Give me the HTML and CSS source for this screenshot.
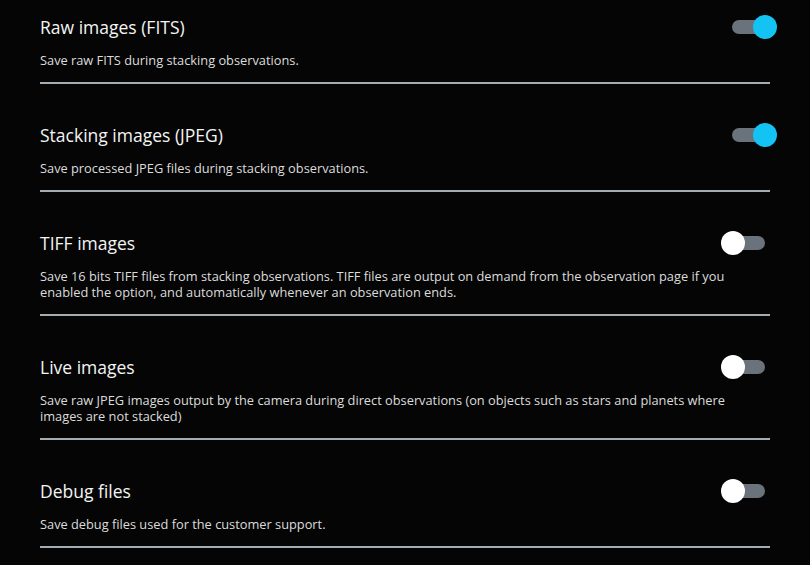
FILE: index.html
```html
<!DOCTYPE html>
<html>
<head>
<meta charset="utf-8">
<link rel="stylesheet" href="styles.css">
</head>
<body>
<div class="list">
  <section class="item">
    <div class="head">
      <h2 class="title">Raw images (FITS)</h2>
      <span class="toggle on"><span class="track"></span><span class="knob"></span></span>
    </div>
    <p class="desc">Save raw FITS during stacking observations.</p>
  </section>
  <section class="item">
    <div class="head">
      <h2 class="title">Stacking images (JPEG)</h2>
      <span class="toggle on"><span class="track"></span><span class="knob"></span></span>
    </div>
    <p class="desc">Save processed JPEG files during stacking observations.</p>
  </section>
  <section class="item">
    <div class="head">
      <h2 class="title">TIFF images</h2>
      <span class="toggle"><span class="track"></span><span class="knob"></span></span>
    </div>
    <p class="desc">Save 16 bits TIFF files from stacking observations. TIFF files are output on demand from the observation page if you enabled the option, and automatically whenever an observation ends.</p>
  </section>
  <section class="item">
    <div class="head">
      <h2 class="title">Live images</h2>
      <span class="toggle"><span class="track"></span><span class="knob"></span></span>
    </div>
    <p class="desc">Save raw JPEG images output by the camera during direct observations (on objects such as stars and planets where images are not stacked)</p>
  </section>
  <section class="item">
    <div class="head">
      <h2 class="title">Debug files</h2>
      <span class="toggle"><span class="track"></span><span class="knob"></span></span>
    </div>
    <p class="desc">Save debug files used for the customer support.</p>
  </section>
</div>
</body>
</html>
```

FILE: styles.css
```css
html, body {
  margin: 0;
  padding: 0;
  background: #050505;
}
body {
  font-family: "Open Sans", "Liberation Sans", sans-serif;
  color: #f2f2f2;
}
.list {
  padding: 15px 40px 0 40px;
  width: 730px;
}
.item {
  padding: 39px 0 14px 0;
  border-bottom: 2px solid #a4acb4;
}
.item:first-child {
  padding-top: 0;
}
.head {
  display: flex;
  align-items: center;
  justify-content: space-between;
  height: 24px;
}
.title {
  margin: 0;
  font-size: 17.5px;
  font-weight: 400;
  line-height: 24px;
  color: #f4f4f4;
}
.desc {
  margin: 13px 0 0 0;
  padding-right: 10px;
  font-size: 12.8px;
  line-height: 16px;
  color: #dcdcdc;
}
.toggle {
  position: relative;
  width: 56px;
  height: 24px;
  margin-right: -7px;
  flex-shrink: 0;
}
.track {
  position: absolute;
  left: 1px;
  top: 5px;
  width: 43px;
  height: 14px;
  border-radius: 7px;
  background: #6a727b;
}
.knob {
  position: absolute;
  left: 0;
  top: 0;
  width: 24px;
  height: 24px;
  border-radius: 50%;
  background: #ffffff;
}
.toggle.on .track {
  left: 11px;
  width: 40px;
}
.toggle.on .knob {
  left: 32px;
  background: #12c3f3;
}
```
